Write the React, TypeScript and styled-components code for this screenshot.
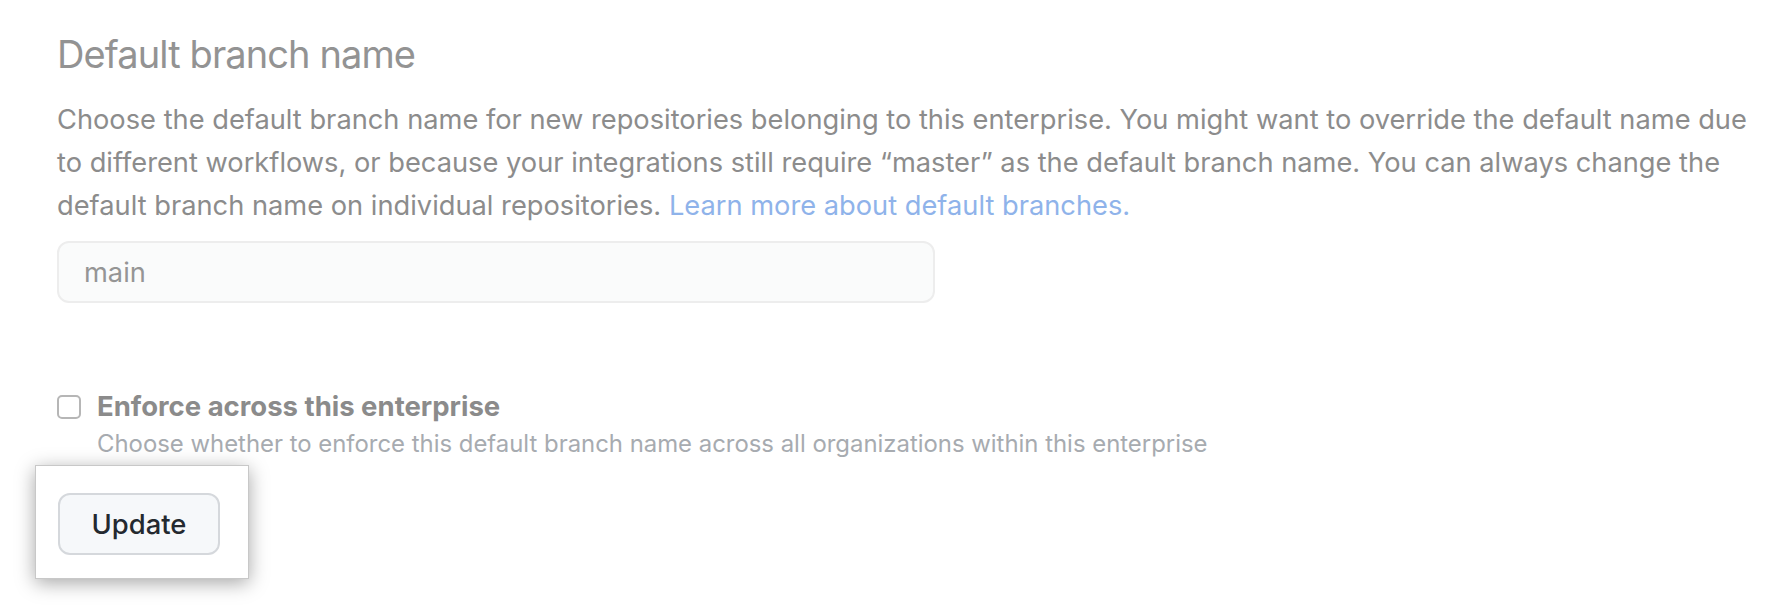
import React from "react";
import styled, { createGlobalStyle } from "styled-components";

const GlobalStyle = createGlobalStyle`
  html, body {
    margin: 0;
    padding: 0;
    background: #ffffff;
  }
  body {
    font-family: Inter, Roboto, "Liberation Sans", Arial, sans-serif;
    -webkit-font-smoothing: antialiased;
  }
`;

const Page = styled.div`
  width: 1790px;
  height: 606px;
  box-sizing: border-box;
  padding: 30px 0 0 57px;
  display: flex;
  flex-direction: column;
  align-items: flex-start;
  overflow: hidden;
`;

const Heading = styled.h2`
  margin: 0 0 21px;
  font-size: 38px;
  letter-spacing: -0.9px;
  line-height: 48px;
  font-weight: 400;
  color: #939393;
`;

const Description = styled.p`
  margin: 0 0 14px;
  width: 1725px;
  font-size: 27.25px;
  line-height: 42.75px;
  color: #8c8c8c;
`;

const Link = styled.a`
  color: #8fb3ea;
  text-decoration: none;
`;

const TextField = styled.input`
  box-sizing: border-box;
  width: 878px;
  height: 62px;
  margin: 0 0 92px;
  padding: 0 25px;
  border: 2px solid #ededed;
  border-radius: 12px;
  background: #fafbfb;
  font-family: inherit;
  font-size: 27.25px;
  color: #959595;
  outline: none;
`;

const CheckRow = styled.label`
  display: grid;
  grid-template-columns: 24px 1fr;
  column-gap: 16px;
  align-items: start;
`;

const Box = styled.span`
  box-sizing: border-box;
  width: 24px;
  height: 24px;
  border: 2px solid #b6b6b6;
  border-radius: 5px;
  background: #ffffff;
`;

const CheckText = styled.span`
  display: flex;
  flex-direction: column;
  margin-top: -9px;
`;

const CheckLabel = styled.span`
  font-size: 27.5px;
  line-height: 40px;
  font-weight: 700;
  color: #8b8b8b;
`;

const CheckNote = styled.span`
  font-size: 23.9px;
  line-height: 36px;
  color: #a7abb0;
`;

const Highlight = styled.div`
  margin: 3px 0 0 -22px;
  padding: 27px 28px 23px 22px;
  background: #ffffff;
  border: 1px solid #c8c8c8;
  box-shadow: 0 4px 18px rgba(0, 0, 0, 0.35);
`;

const Button = styled.button`
  box-sizing: border-box;
  width: 162px;
  height: 62px;
  padding: 0;
  border: 2px solid #d5d8dc;
  border-radius: 12px;
  background: #f6f8fa;
  font-family: inherit;
  font-size: 27.4px;
  font-weight: 500;
  color: #24292f;
  cursor: pointer;
`;

export default function App() {
  return (
    <>
      <GlobalStyle />
      <Page>
        <Heading>Default branch name</Heading>
        <Description>
          Choose the default branch name for new repositories belonging to this enterprise. You might want to override the default name due
          <br />
          to different workflows, or because your integrations still require “master” as the default branch name. You can always change the
          <br />
          default branch name on individual repositories. <Link href="#">Learn more about default branches.</Link>
        </Description>
        <TextField defaultValue="main" />
        <CheckRow>
          <Box />
          <CheckText>
            <CheckLabel>Enforce across this enterprise</CheckLabel>
            <CheckNote>
              Choose whether to enforce this default branch name across all organizations within this enterprise
            </CheckNote>
          </CheckText>
        </CheckRow>
        <Highlight>
          <Button>Update</Button>
        </Highlight>
      </Page>
    </>
  );
}
